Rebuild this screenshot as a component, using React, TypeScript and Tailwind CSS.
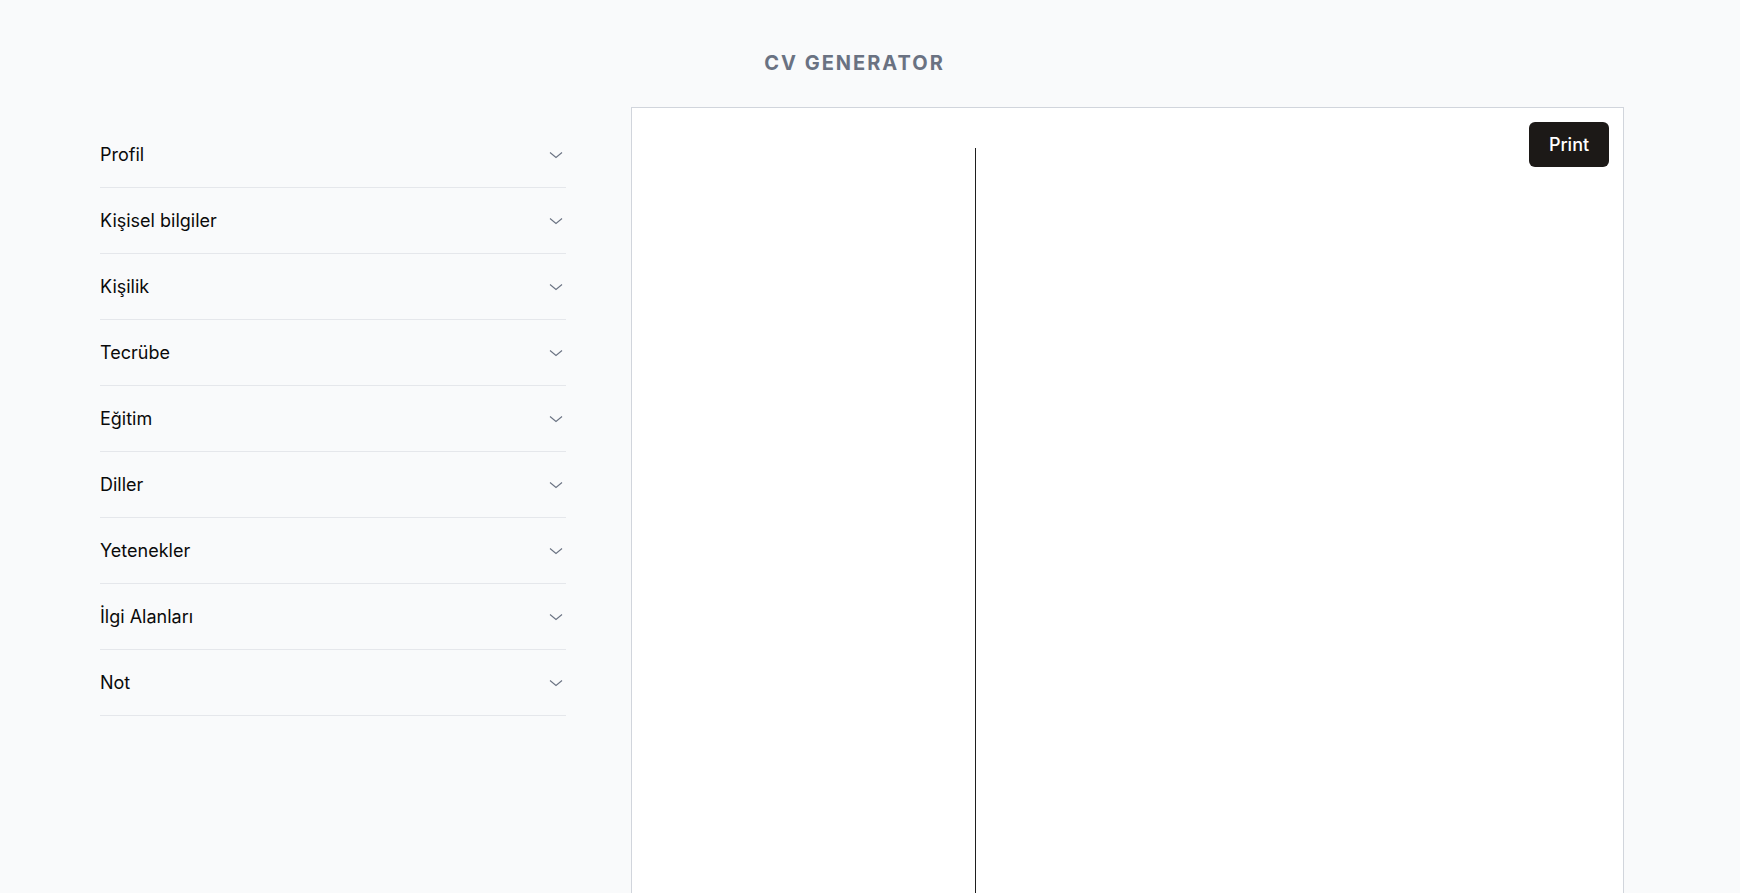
import { useState } from "react";

const sections = [
  "Profil",
  "Kişisel bilgiler",
  "Kişilik",
  "Tecrübe",
  "Eğitim",
  "Diller",
  "Yetenekler",
  "İlgi Alanları",
  "Not",
];

function Chevron() {
  return (
    <svg width="14" height="8" viewBox="0 0 14 8" fill="none" className="text-gray-500">
      <path d="M1 1.5 7 6.5 13 1.5" stroke="currentColor" strokeWidth="1.1" />
    </svg>
  );
}

export default function App() {
  const [open, setOpen] = useState<string | null>(null);

  return (
    <div className="min-h-screen bg-gray-50 font-['Inter',sans-serif] text-[#0a0a0a]">
      <div className="flex justify-center pr-[31px] pt-[49px]">
        <h1 className="text-xl leading-7 font-bold tracking-widest text-gray-500">
          CV GENERATOR
        </h1>
      </div>

      <div className="mt-[30px] flex gap-[65px] pl-[100px]">
        <div className="mt-[15px] w-[466px]">
          {sections.map((s) => (
            <div key={s} className="border-b border-gray-200">
              <button
                onClick={() => setOpen(open === s ? null : s)}
                className="flex h-[65px] w-full items-center justify-between pr-[3px] text-left text-lg"
              >
                <span>{s}</span>
                <Chevron />
              </button>
            </div>
          ))}
        </div>

        <div className="relative h-[1200px] w-[993px] border border-gray-300 bg-white">
          <button className="absolute top-[14px] right-[14px] h-[45px] w-[80px] rounded-md bg-[#1c1917] text-lg font-medium text-white">
            Print
          </button>
          <div className="flex h-full pt-[40px]">
            <div className="w-[344px] border-r border-[#1f1f1f]" />
            <div className="flex-1" />
          </div>
        </div>
      </div>
    </div>
  );
}
